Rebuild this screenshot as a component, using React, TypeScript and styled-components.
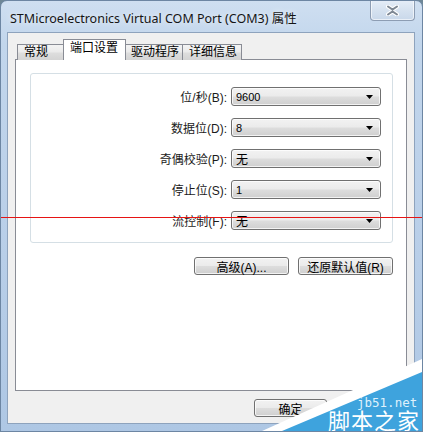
import { Fragment } from 'react';
import styled, { createGlobalStyle } from 'styled-components';

const GlobalStyle = createGlobalStyle`
  html, body {
    margin: 0;
    padding: 0;
  }
  body {
    width: 423px;
    height: 432px;
    overflow: hidden;
    background: #6e8797;
    font-family: "Noto Sans CJK SC", sans-serif;
  }
`;

const cjk = `"Liberation Sans", "Noto Sans CJK SC", sans-serif`;

const Window = styled.div`
  position: relative;
  box-sizing: border-box;
  width: 423px;
  height: 432px;
  display: flex;
  flex-direction: column;
  padding: 0 7px 7px 6px;
  border: 1px solid #6d86a3;
  border-radius: 7px 7px 0 0;
  background: linear-gradient(180deg, #cfdff1 0%, #c2d6ec 10%, #b8cee8 60%, #aec7e4 100%);
  overflow: hidden;
`;

const TitleBar = styled.div`
  height: 31px;
  display: flex;
  justify-content: space-between;
  align-items: center;
`;

const TitleText = styled.div`
  padding-left: 3px;
  padding-top: 2px;
  font-family: "Noto Sans", "Noto Sans CJK SC", sans-serif;
  font-size: 12.5px;
  color: #151515;
  text-shadow: 0 0 6px rgba(255, 255, 255, 0.9);
  white-space: nowrap;
`;

const CloseButton = styled.div`
  align-self: flex-start;
  margin-top: -1px;
  box-sizing: border-box;
  width: 45px;
  height: 21px;
  display: flex;
  align-items: center;
  justify-content: center;
  border: 1px solid #8d9db3;
  border-top: none;
  border-radius: 0 0 4px 4px;
  background: linear-gradient(180deg, #e6eef8 0%, #d6e2f0 50%, #c9d8ea 100%);
  box-shadow: inset 0 0 0 1px rgba(255, 255, 255, 0.6);
`;

const Client = styled.div`
  flex: 1;
  display: flex;
  flex-direction: column;
  padding: 6px 7px 0 7px;
  background: #f0f0f0;
  border: 1px solid #8ea3bd;
`;

const TabStrip = styled.div`
  display: flex;
  align-items: flex-end;
  height: 20px;
  padding-left: 2px;
  position: relative;
  z-index: 1;
`;

const Tab = styled.div<{ $active?: boolean; $w: number; $ml?: number }>`
  box-sizing: border-box;
  width: ${({ $w }) => $w}px;
  margin-left: ${({ $ml }) => $ml ?? 0}px;
  margin-bottom: -1px;
  padding-left: 6px;
  border: 1px solid #898c95;
  border-bottom: none;
  font-family: ${cjk};
  font-size: 12px;
  color: #000;
  white-space: nowrap;
  ${({ $active }) =>
    $active
      ? `
    height: 21px;
    line-height: 17px;
    background: #fff;
    position: relative;
    z-index: 2;
    margin-right: -2px;
  `
      : `
    height: 16px;
    line-height: 15px;
    background: linear-gradient(180deg, #f3f3f3 0%, #ebebeb 45%, #dddddd 55%, #d4d4d4 100%);
  `}
`;

const Panel = styled.div`
  box-sizing: border-box;
  height: 332px;
  padding: 13px 13px 0 14px;
  background: #fff;
  border: 1px solid #898c95;
`;

const GroupBox = styled.div`
  display: grid;
  grid-template-columns: 1fr 150px;
  column-gap: 4px;
  row-gap: 12px;
  align-items: center;
  padding: 13px 11px 12px 0;
  border: 1px solid #d5dfe5;
  border-radius: 3px;
`;

const Label = styled.div`
  text-align: right;
  font-family: ${cjk};
  font-size: 12px;
  color: #1b1b1b;
  white-space: nowrap;
`;

const Select = styled.div`
  position: relative;
  box-sizing: border-box;
  height: 19px;
  display: flex;
  align-items: center;
  padding-left: 4px;
  border: 1px solid #707070;
  border-radius: 3px;
  background: linear-gradient(180deg, #f2f2f2 0%, #ebebeb 48%, #dddddd 52%, #cfcfcf 100%);
  box-shadow: inset 0 0 0 1px rgba(255, 255, 255, 0.75);
  font-family: "Liberation Sans", "Noto Sans CJK SC", sans-serif;
  font-size: 11px;
  color: #000;
`;

const SelectValue = styled.span<{ $cjk?: boolean }>`
  font-size: ${({ $cjk }) => ($cjk ? 12 : 11)}px;
`;

const Arrow = styled.svg`
  position: absolute;
  right: 7px;
  top: 7px;
`;

const ButtonRow = styled.div<{ $gap: number; $top: number }>`
  display: flex;
  justify-content: flex-end;
  gap: ${({ $gap }) => $gap}px;
  margin-top: ${({ $top }) => $top}px;
`;

const Button = styled.div<{ $w: number }>`
  box-sizing: border-box;
  width: ${({ $w }) => $w}px;
  height: 18px;
  display: flex;
  align-items: center;
  justify-content: center;
  border: 1px solid #707070;
  border-radius: 3px;
  background: linear-gradient(180deg, #f2f2f2 0%, #ebebeb 48%, #dddddd 52%, #cfcfcf 100%);
  box-shadow: inset 0 0 0 1px rgba(255, 255, 255, 0.75);
  font-family: ${cjk};
  font-size: 12px;
  color: #000;
  white-space: nowrap;
`;

const RedLine = styled.div`
  position: absolute;
  left: 0;
  top: 216px;
  width: 423px;
  height: 0;
  border-top: 1px solid rgb(230, 20, 20);
  z-index: 5;
`;

const Watermark = styled.div`
  position: absolute;
  right: 0;
  bottom: 0;
  width: 200px;
  height: 100px;
  z-index: 6;
`;

const Wedge = styled.div<{ $color: string; $clip: string }>`
  position: absolute;
  inset: 0;
  background: ${({ $color }) => $color};
  clip-path: polygon(${({ $clip }) => $clip});
`;

const SiteUrl = styled.span`
  position: absolute;
  left: 135px;
  top: 65px;
  font-family: "DejaVu Sans Mono", monospace;
  font-size: 12.5px;
  line-height: 14px;
  color: #dff1fc;
`;

const SiteName = styled.span`
  position: absolute;
  left: 106px;
  top: 77px;
  font-family: "Noto Sans CJK SC", sans-serif;
  font-size: 22px;
  line-height: 22px;
  color: #ffffff;
  letter-spacing: 1px;
`;

const rows = [
  { label: '位/秒(B):', value: '9600' },
  { label: '数据位(D):', value: '8' },
  { label: '奇偶校验(P):', value: '无', cjk: true },
  { label: '停止位(S):', value: '1' },
  { label: '流控制(F):', value: '无', cjk: true },
];

export default function App() {
  return (
    <>
      <GlobalStyle />
      <Window>
        <TitleBar>
          <TitleText>STMicroelectronics Virtual COM Port (COM3) 属性</TitleText>
          <CloseButton>
            <svg width="13" height="11" viewBox="0 0 13 11">
              <path
                d="M2 1.5 L6.5 4.5 L11 1.5 M2 9.5 L6.5 6.5 L11 9.5"
                stroke="#ffffff"
                strokeWidth="4"
                fill="none"
                strokeLinecap="round"
              />
              <path
                d="M2 1.5 L6.5 4.5 L11 1.5 M2 9.5 L6.5 6.5 L11 9.5"
                stroke="#7e8894"
                strokeWidth="2"
                fill="none"
                strokeLinecap="round"
              />
            </svg>
          </CloseButton>
        </TitleBar>
        <Client>
          <TabStrip>
            <Tab $w={48}>常规</Tab>
            <Tab $active $w={63} $ml={-2}>端口设置</Tab>
            <Tab $w={59}>驱动程序</Tab>
            <Tab $w={60} $ml={-1}>详细信息</Tab>
          </TabStrip>
          <Panel>
            <GroupBox>
              {rows.map((row) => (
                <Fragment key={row.label}>
                  <Label>{row.label}</Label>
                  <Select>
                    <SelectValue $cjk={row.cjk}>{row.value}</SelectValue>
                    <Arrow width="7" height="4" viewBox="0 0 7 4">
                      <path d="M0 0 H7 L3.5 4 Z" fill="#000" />
                    </Arrow>
                  </Select>
                </Fragment>
              ))}
            </GroupBox>
            <ButtonRow $gap={9} $top={14}>
              <Button $w={95}>高级(A)...</Button>
              <Button $w={95}>还原默认值(R)</Button>
            </ButtonRow>
          </Panel>
          <ButtonRow $gap={7} $top={8}>
            <Button $w={73}>确定</Button>
            <Button $w={73}>取消</Button>
          </ButtonRow>
        </Client>
        <RedLine />
        <Watermark>
          <Wedge $color="#ffffff" $clip="40px 100px, 200px 28px, 200px 100px" />
          <Wedge $color="#3ea3dd" $clip="60px 100px, 200px 41px, 200px 100px" />
          <SiteUrl>jb51.net</SiteUrl>
          <SiteName>脚本之家</SiteName>
        </Watermark>
      </Window>
    </>
  );
}
